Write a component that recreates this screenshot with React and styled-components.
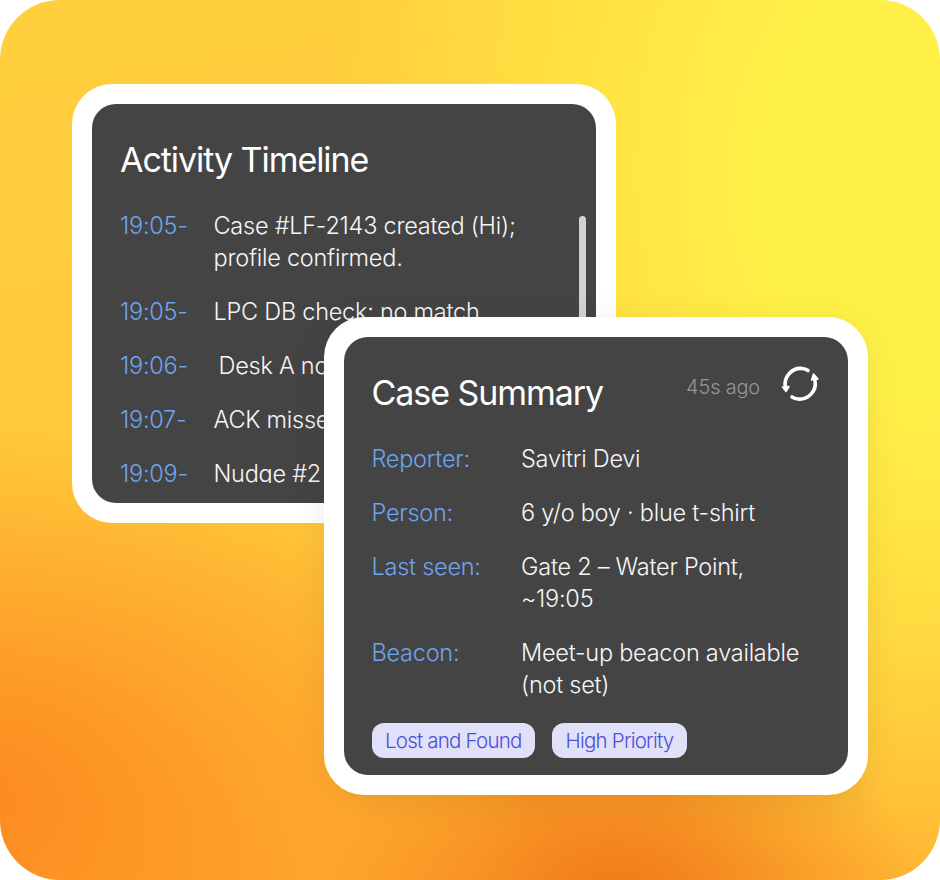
import React from "react";
import styled, { createGlobalStyle } from "styled-components";

const Global = createGlobalStyle`
  html, body { margin: 0; padding: 0; background: #fff; }
  body { font-family: Inter, "Liberation Sans", sans-serif; -webkit-font-smoothing: antialiased; }
`;

const Stage = styled.div`
  width: 940px;
  height: 880px;
  box-sizing: border-box;
  padding: 84px 72px 0;
  border-radius: 60px;
  overflow: hidden;
  background:
    radial-gradient(300px 240px at 620px 900px, rgba(240,118,24,.95), rgba(240,118,24,0) 100%),
    radial-gradient(520px 380px at -40px 800px, rgba(252,134,30,.95), rgba(252,134,30,0) 100%),
    radial-gradient(600px 800px at 920px 180px, #fff048 0%, #fff048 28%, rgba(255,240,72,0) 100%),
    linear-gradient(170deg, #ffcf3c 0%, #ffc93a 50%, #ffa82e 100%);
`;

const Card = styled.section`
  width: 544px;
  box-sizing: border-box;
  padding: 20px;
  background: #fff;
  border-radius: 40px;
  box-shadow: ${(p) => (p.$raised ? "0 6px 36px rgba(0,0,0,.08)" : "none")};
  position: relative;
`;

const Front = styled(Card)`
  margin: -206px 0 0 252px;
`;

const Panel = styled.div`
  background: #444444;
  border-radius: 24px;
  color: #f4f4f4;
  height: ${(p) => p.$h}px;
  box-sizing: border-box;
  position: relative;
`;

const TimelineBody = styled(Panel)`
  padding: 36px 0 0 28px;
`;

const SummaryBody = styled(Panel)`
  padding: 36px 28px 0 27.500px;
`;

const Title = styled.h2`
  margin: 0;
  font-size: 34px;
  line-height: 40px;
  font-weight: 430;
  letter-spacing: -1.05px;
  color: #fff;
`;

const Scrollbar = styled.div`
  position: absolute;
  right: 10px;
  top: 6px;
  width: 7px;
  height: 300px;
  border-radius: 4px;
  background: #d2d2d2;
`;

const Events = styled.div`
  margin-top: 30px;
  height: 273px;
  overflow: hidden;
  position: relative;
  display: flex;
  flex-direction: column;
  gap: 22px;
`;

const Event = styled.div`
  display: grid;
  grid-template-columns: 93.500px 340px;
  font-size: 23.500px;
  line-height: 32px;
  font-weight: 360;
  letter-spacing: -0.25px;
  flex: none;
`;

const Time = styled.span`
  color: #6fa3ee;
`;

const EventText = styled.span`
  color: #f6f6f6;
  padding-left: ${(p) => (p.$nudge ? "5px" : "0")};
`;

const Head = styled.header`
  display: flex;
  align-items: flex-start;
  justify-content: space-between;
`;

const Meta = styled.div`
  display: flex;
  align-items: center;
  gap: 20px;
  margin-top: -9px;
`;

const Ago = styled.span`
  font-size: 20px;
  line-height: 28px;
  font-weight: 300;
  color: #959595;
  letter-spacing: -0.2px;
  margin-top: 6px;
`;

const Facts = styled.dl`
  margin: 30px 0 0;
  display: grid;
  grid-template-columns: 149.500px 290px;
  row-gap: 22px;
  font-size: 23.500px;
  line-height: 32px;
  font-weight: 360;
  letter-spacing: -0.25px;
`;

const Label = styled.dt`
  color: #6fa3ee;
`;

const Value = styled.dd`
  margin: 0;
  color: #f6f6f6;
`;

const Tags = styled.div`
  display: flex;
  gap: 17px;
  margin-top: 22px;
`;

const Tag = styled.span`
  height: 35px;
  padding: 0 13.500px;
  display: flex;
  align-items: center;
  border-radius: 12px;
  background: #e0e1f8;
  color: #4a50d8;
  font-size: 20.500px;
  font-weight: 320;
  letter-spacing: -0.78px;
`;

const events = [
  ["19:05-", "Case #LF-2143 created (Hi); profile confirmed."],
  ["19:05-", "LPC DB check: no match."],
  ["19:06-", "Desk A notified.", true],
  ["19:07-", "ACK missed; escalated."],
  ["19:09-", "Nudge #2 sent to Desk A."],
];

const facts = [
  ["Reporter:", "Savitri Devi"],
  ["Person:", "6 y/o boy · blue t-shirt"],
  ["Last seen:", "Gate 2 – Water Point, ~19:05"],
  ["Beacon:", "Meet-up beacon available (not set)"],
];

const Refresh = () => (
  <svg width="40" height="40" viewBox="0 0 40 40" fill="none" stroke="#fff" strokeWidth="3.6" strokeLinecap="round">
    <path d="M5.500 24 C3 13 12 3.500 22 4.500 C24.500 4.800 26.500 5.500 28 6.500" />
    <path d="M35 17 C37 27 28 36 18 35 C15.500 34.800 13.500 34 12 33" />
    <path d="M2.500 23 L9 22.500 L6 27.500 Z" fill="#fff" strokeWidth="1.500" strokeLinejoin="round" />
    <path d="M31.500 16 L38 15 L33.500 10 Z" fill="#fff" strokeWidth="1.500" strokeLinejoin="round" />
  </svg>
);

export default function App() {
  return (
    <Stage>
      <Global />
      <Card>
        <TimelineBody $h={399}>
          <Title>Activity Timeline</Title>
          <Events>
            <Scrollbar />
            {events.map(([t, e, nudge], i) => (
              <Event key={i}>
                <Time>{t}</Time>
                <EventText $nudge={nudge}>{e}</EventText>
              </Event>
            ))}
          </Events>
        </TimelineBody>
      </Card>
      <Front $raised>
        <SummaryBody $h={438}>
          <Head>
            <Title>Case Summary</Title>
            <Meta>
              <Ago>45s ago</Ago>
              <Refresh />
            </Meta>
          </Head>
          <Facts>
            {facts.map(([l, v]) => (
              <React.Fragment key={l}>
                <Label>{l}</Label>
                <Value>{v}</Value>
              </React.Fragment>
            ))}
          </Facts>
          <Tags>
            <Tag>Lost and Found</Tag>
            <Tag>High Priority</Tag>
          </Tags>
        </SummaryBody>
      </Front>
    </Stage>
  );
}
